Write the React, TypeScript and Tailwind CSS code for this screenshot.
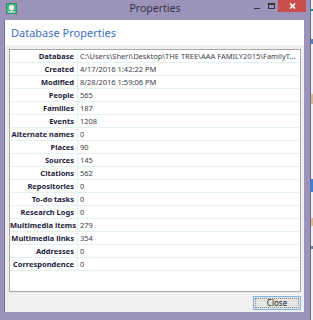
const rows: [string, string][] = [
  ["Database", "C:\\Users\\Sheri\\Desktop\\THE TREE\\AAA FAMILY2015\\FamilyT..."],
  ["Created", "4/17/2016 1:42:22 PM"],
  ["Modified", "8/28/2016 1:59:06 PM"],
  ["People", "565"],
  ["Families", "187"],
  ["Events", "1208"],
  ["Alternate names", "0"],
  ["Places", "90"],
  ["Sources", "145"],
  ["Citations", "562"],
  ["Repositories", "0"],
  ["To-do tasks", "0"],
  ["Research Logs", "0"],
  ["Multimedia items", "279"],
  ["Multimedia links", "354"],
  ["Addresses", "0"],
  ["Correspondence", "0"],
];

function AppIcon() {
  return (
    <svg width="11" height="11" viewBox="0 0 11 11">
      <rect x="0" y="0" width="11" height="11" fill="#2f8f6f" />
      <rect x="1" y="1" width="9" height="9" fill="#4fb08a" />
      <circle cx="5.5" cy="4.5" r="2.6" fill="#e8f6ee" />
      <rect x="5" y="6" width="1" height="3" fill="#e8f6ee" />
      <rect x="2" y="8.5" width="7" height="1" fill="#e8f6ee" />
    </svg>
  );
}

export default function App() {
  return (
    <div
      className="w-[313px] h-[320px] flex bg-[#9c93bb] overflow-hidden"
      style={{ fontFamily: '"Noto Sans", "Open Sans", sans-serif' }}
    >
      {/* Dialog window */}
      <div className="w-[311px] h-[320px] flex flex-col border-r border-[#6f6790]">
        {/* Title bar */}
        <div className="h-[20px] flex items-start relative">
          <div className="pl-[6px] pt-[3px]">
            <AppIcon />
          </div>
          <div className="absolute left-0 right-0 top-[1px] text-center text-[10.5px] text-[#34343e]">
            Properties
          </div>
          <div className="ml-auto flex items-start mr-[4px]">
            <div className="w-[14px] h-[12px] flex items-end justify-center pb-[3px]">
              <div className="w-[6px] h-[1px] bg-[#333]" />
            </div>
            <div className="w-[14px] h-[12px] flex items-start justify-center pt-[3px]">
              <div className="w-[7px] h-[6px] border border-[#333] border-t-2" />
            </div>
            <div className="w-[28px] h-[12px] bg-[#c9504a] flex items-center justify-center">
              <svg width="7" height="6" viewBox="0 0 7 6">
                <path d="M1 0.5 L6 5.5 M6 0.5 L1 5.5" stroke="#fff" strokeWidth="1.6" />
              </svg>
            </div>
          </div>
        </div>

        {/* Client area */}
        <div className="flex-1 flex pb-[8px]">
          <div className="w-[5px] border-r border-[#7a7299]" />
          <div className="w-[299px] flex flex-col bg-[#f0f0f0]">
            <div className="h-[25px] bg-white pl-[6px] pt-[5px] text-[11px] leading-[15px] text-[#3f70c4]">
              Database Properties
            </div>
            <div className="flex flex-col pl-[4px] pr-[3px] pt-[4px]">
              <div className="h-[243px] bg-white border border-[#a8a8a8]">
                {rows.map(([label, value]) => (
                  <div key={label} className="h-[13px] flex border-b border-[#e3f2f0]">
                    <div className="w-[68px] pr-[3px] text-right text-[7.5px] leading-[12px] font-bold text-[#1c1c3c] whitespace-nowrap border-r border-[#e3f2f0]">
                      {label}
                    </div>
                    <div className="pl-[2px] text-[7.5px] leading-[12px] text-[#3e4048] whitespace-nowrap overflow-hidden">
                      {value}
                    </div>
                  </div>
                ))}
              </div>
              <div className="flex justify-end pt-[4px]">
                <div className="w-[48px] h-[14px] border border-[#7eb4ea] bg-[#e3e3e3] p-[1px]">
                  <div className="h-full border border-dotted border-[#888] flex items-center justify-center text-[8px] text-[#222]">
                    Close
                  </div>
                </div>
              </div>
            </div>
          </div>
        </div>
      </div>

      {/* Background window strip */}
      <div className="w-[2px] h-[320px] flex flex-col bg-[#eef0f2]">
        <div className="h-[9px]" />
        <div className="h-[2px] bg-[#2a8a7a]" />
        <div className="h-[28px]" />
        <div className="h-[5px] bg-[#5a7fb0]" />
        <div className="h-[50px]" />
        <div className="h-[10px] bg-[#d9b98f]" />
        <div className="h-[75px]" />
        <div className="h-[13px] bg-[#2f86e0]" />
        <div className="h-[26px]" />
        <div className="h-[8px] bg-[#d9b98f]" />
        <div className="h-[20px]" />
        <div className="h-[3px] bg-[#6a7a90]" />
      </div>
    </div>
  );
}
